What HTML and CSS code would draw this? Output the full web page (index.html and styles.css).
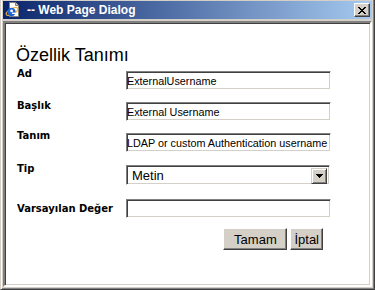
FILE: index.html
```html
<!DOCTYPE html>
<html>
<head>
    <meta charset="UTF-8">
    <title>-- Web Page Dialog</title>
    <link rel="stylesheet" href="styles.css">
</head>
<body>
    <div class="window">
        <div class="caption">
            <svg class="caption-icon" width="16" height="16" viewBox="0 0 16 16">
                <path d="M4.5 0.5h6l3 3v11h-9z" fill="#fff" stroke="#808080"/>
                <path d="M10.5 0.5v3h3" fill="#d4d0c8" stroke="#808080"/>
                <ellipse cx="7" cy="9.5" rx="6.5" ry="2.6" fill="none" stroke="#f0b040" stroke-width="1.2" transform="rotate(-30 7 9.5)"/>
                <circle cx="6.5" cy="10" r="4.2" fill="#1e64d0"/>
                <circle cx="6.6" cy="8.9" r="1.4" fill="#fff"/>
                <rect x="7" y="10.6" width="4" height="1.4" fill="#fff"/>
            </svg>
            <span class="caption-title">-- Web Page Dialog</span>
            <button class="caption-close" type="button">
                <svg width="8" height="7" viewBox="0 0 8 7" shape-rendering="crispEdges">
                    <path d="M0 0h2v1h-2zM6 0h2v1h-2zM1 1h2v1h-2zM5 1h2v1h-2zM2 2h4v1h-4zM3 3h2v1h-2zM2 4h4v1h-4zM1 5h2v1h-2zM5 5h2v1h-2zM0 6h2v1h-2zM6 6h2v1h-2z" fill="#000"/>
                </svg>
            </button>
        </div>

        <div class="client">
            <h1 class="title">Özellik Tanımı</h1>

            <form class="form">
                <label class="label" for="ad">Ad</label>
                <input class="field" id="ad" type="text" value="ExternalUsername">

                <label class="label label-mid" for="baslik">Başlık</label>
                <input class="field" id="baslik" type="text" value="External Username">

                <label class="label" for="tanim">Tanım</label>
                <input class="field" id="tanim" type="text" value="LDAP or custom Authentication username">

                <label class="label label-tip" for="tip">Tip</label>
                <div class="select-box">
                    <select class="select" id="tip">
                        <option>Metin</option>
                    </select>
                    <span class="select-arrow">
                        <svg width="7" height="4" viewBox="0 0 7 4" shape-rendering="crispEdges">
                            <path d="M0 0h7v1h-1v1h-1v1h-1v1h-1v-1h-1v-1h-1v-1h-1z" fill="#000"/>
                        </svg>
                    </span>
                </div>

                <label class="label label-default" for="varsayilan">Varsayılan Değer</label>
                <input class="field field-default" id="varsayilan" type="text" value="">

                <div class="actions">
                    <button class="btn btn-ok" type="button">Tamam</button>
                    <button class="btn" type="button">İptal</button>
                </div>
            </form>
        </div>
    </div>
</body>
</html>
```

FILE: styles.css
```css
:root {
    --face-color: #d4d0c8;
    --shadow-color: #808080;
    --dark-shadow-color: #404040;
    --highlight-color: #fff;
    --caption-start: #0a246a;
    --caption-end: #a6caf0;
}

* {
    box-sizing: border-box;
    margin: 0;
    padding: 0;
}

body {
    margin: 0;
    background: var(--face-color);
    font-family: 'Liberation Sans', Arial, sans-serif;
    color: #000;
}

.window {
    width: 375px;
    height: 290px;
    display: flex;
    flex-direction: column;
    padding: 1px 2px 2px 2px;
    background: var(--face-color);
    border-left: 1px solid var(--face-color);
    border-right: 1px solid var(--dark-shadow-color);
    border-bottom: 1px solid var(--dark-shadow-color);
    box-shadow: inset 1px 0 var(--highlight-color), inset -1px -1px var(--shadow-color);
}

.caption {
    height: 18px;
    margin-bottom: 2px;
    padding: 0 2px;
    display: flex;
    align-items: center;
    background: linear-gradient(to right, var(--caption-start), var(--caption-end));
}

.caption-icon {
    flex: none;
    margin-right: 6px;
}

.caption-title {
    flex: 1;
    color: #fff;
    font-weight: bold;
    font-size: 12px;
    line-height: 14px;
    white-space: nowrap;
}

.caption-close {
    width: 16px;
    height: 14px;
    display: flex;
    align-items: center;
    justify-content: center;
    background: var(--face-color);
    border: 1px solid;
    border-color: var(--highlight-color) var(--dark-shadow-color) var(--dark-shadow-color) var(--highlight-color);
    box-shadow: inset -1px -1px var(--shadow-color);
}

.client {
    flex: 1;
    padding: 22px 0 0 11px;
    background: #fff;
    border: 2px solid;
    border-color: var(--shadow-color) var(--highlight-color) var(--highlight-color) var(--shadow-color);
    box-shadow: inset 1px 1px var(--dark-shadow-color), inset -1px -1px var(--face-color);
}

.title {
    font-size: 18px;
    line-height: 21px;
    font-weight: normal;
}

.form {
    margin-top: 5px;
    display: grid;
    grid-template-columns: 110px 205px;
    row-gap: 12px;
}

.label {
    align-self: start;
    margin-top: -3px;
    padding-left: 1px;
    font-family: 'DejaVu Sans', Verdana, sans-serif;
    font-weight: bold;
    font-size: 10px;
    line-height: 12px;
}

.label-mid { margin-top: -2px; }
.label-tip { margin-top: -1px; }
.label-default { margin-top: 6px; }

.field {
    width: 100%;
    height: 19px;
    padding: 0;
    font-family: 'Liberation Sans', Arial, sans-serif;
    font-size: 10.8px;
    color: #000;
    background: #fff;
    border: 1px solid;
    border-color: var(--shadow-color) var(--highlight-color) var(--highlight-color) var(--shadow-color);
    box-shadow: inset 1px 1px var(--dark-shadow-color), inset -1px -1px var(--face-color);
    outline: none;
}

.field-default {
    margin-top: 2px;
}

.select-box {
    margin-top: 1px;
    height: 20px;
    display: flex;
    padding: 2px;
    background: #fff;
    border: 1px solid;
    border-color: var(--shadow-color) var(--highlight-color) var(--highlight-color) var(--shadow-color);
    box-shadow: inset 1px 1px var(--dark-shadow-color), inset -1px -1px var(--face-color);
    margin-right: 1px;
}

.select {
    flex: 1;
    min-width: 0;
    height: 100%;
    padding: 0 0 0 3px;
    border: none;
    background: transparent;
    font-family: 'Liberation Sans', Arial, sans-serif;
    font-size: 13px;
    color: #000;
    appearance: none;
    -webkit-appearance: none;
    outline: none;
}

.select-arrow {
    flex: none;
    width: 16px;
    height: 16px;
    display: flex;
    align-items: center;
    justify-content: center;
    background: var(--face-color);
    border: 1px solid;
    border-color: var(--face-color) var(--dark-shadow-color) var(--dark-shadow-color) var(--face-color);
    box-shadow: inset 1px 1px var(--highlight-color), inset -1px -1px var(--shadow-color);
}

.actions {
    grid-column: 2;
    margin-top: -2px;
    padding-right: 8px;
    display: flex;
    justify-content: flex-end;
    gap: 3px;
}

.btn {
    height: 22px;
    padding: 0 3px;
    font-family: 'Liberation Sans', Arial, sans-serif;
    font-size: 13px;
    color: #000;
    background: var(--face-color);
    border: 1px solid;
    border-color: var(--highlight-color) var(--dark-shadow-color) var(--dark-shadow-color) var(--highlight-color);
    box-shadow: inset -1px -1px var(--shadow-color);
}

.btn-ok {
    width: 64px;
}
```
